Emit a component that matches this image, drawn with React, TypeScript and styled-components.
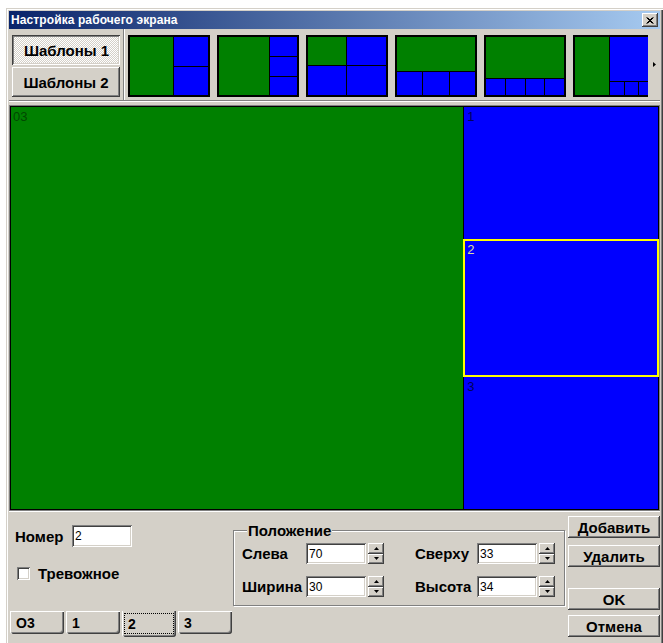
import React from 'react';
import styled, { createGlobalStyle, css } from 'styled-components';

const FACE = '#d4d0c8';
const LIGHT = '#ffffff';
const SHADOW = '#808080';
const DARK = '#404040';
const FONT = `"Liberation Sans", Arial, sans-serif`;

const Global = createGlobalStyle`
  html, body { margin: 0; padding: 0; background: #fff; overflow: hidden; }
  body { font-family: ${FONT}; color: #000; }
`;

const raised = css`
  box-shadow: inset -1px -1px ${DARK}, inset 1px 1px ${LIGHT}, inset -2px -2px ${SHADOW}, inset 2px 2px ${FACE};
`;

const sunken = css`
  box-shadow: inset 1px 1px ${SHADOW}, inset -1px -1px ${LIGHT}, inset 2px 2px ${DARK}, inset -2px -2px ${FACE};
`;

/* ---------- window frame ---------- */

const Desk = styled.div`
  padding: 8px 0 0 6px;
`;

const Window = styled.div`
  width: 657px;
  height: 642px;
  box-sizing: border-box;
  padding: 3px;
  background: ${FACE};
  box-shadow: inset 1px 1px ${FACE}, inset 2px 2px ${LIGHT}, inset -1px -1px ${DARK}, inset -2px -2px ${SHADOW};
  display: flex;
  flex-direction: column;
`;

const TitleBar = styled.div`
  height: 18px;
  flex: 0 0 18px;
  display: flex;
  align-items: center;
  padding: 0 2px 0 2px;
  background: linear-gradient(to right, #0a246a, #a6caf0);
`;

const Title = styled.span`
  flex: 1;
  color: #fff;
  font: bold 12px ${FONT};
  letter-spacing: 0.1px;
`;

const CloseButton = styled.button`
  width: 16px;
  height: 14px;
  padding: 0;
  border: 0;
  background: ${FACE};
  ${raised};
  display: flex;
  align-items: center;
  justify-content: center;
`;

/* ---------- template strip ---------- */

const TemplateRow = styled.div`
  flex: 0 0 72px;
  height: 72px;
  box-sizing: border-box;
  display: flex;
  border-bottom: 1px solid ${SHADOW};
  box-shadow: 0 1px ${LIGHT};
  margin-bottom: 4px;
`;

const TemplateTabs = styled.div`
  width: 114px;
  box-sizing: border-box;
  padding: 6px 3px 0 3px;
  display: flex;
  flex-direction: column;
  gap: 2px;
`;

const PanelButton = styled.button<{ $pressed?: boolean }>`
  height: 30px;
  border: 0;
  padding: 0;
  font: bold 15px ${FONT};
  color: #000;
  background: ${FACE};
  ${raised};
  ${(p) =>
    p.$pressed &&
    css`
      background: conic-gradient(#fff 25%, ${FACE} 0 50%, #fff 0 75%, ${FACE} 0);
      background-size: 2px 2px;
      box-shadow: inset 1px 1px ${DARK}, inset -1px -1px ${LIGHT}, inset 2px 2px ${SHADOW}, inset -2px -2px ${FACE};
      padding: 1px 0 0 1px;
    `}
`;

const Divider = styled.div`
  width: 1px;
  border-left: 1px solid ${SHADOW};
  background: ${LIGHT};
`;

const Thumbs = styled.div`
  flex: 1;
  display: flex;
  gap: 7px;
  padding: 6px 0 0 3px;
  overflow: hidden;
`;

const Thumb = styled.div<{ $cols: string; $rows: string }>`
  flex: 0 0 82px;
  height: 62px;
  box-sizing: border-box;
  display: grid;
  grid-template-columns: ${(p) => p.$cols};
  grid-template-rows: ${(p) => p.$rows};
  gap: 1px;
  padding: 1px;
  border: 1px solid #000;
  background: #000;
`;

const ThumbCell = styled.div<{ $area: string; $main?: boolean }>`
  grid-area: ${(p) => p.$area};
  background: ${(p) => (p.$main ? '#008000' : '#0000ff')};
`;

const ScrollArrow = styled.div`
  flex: 0 0 12px;
  display: flex;
  align-items: center;
  justify-content: center;
`;

/* ---------- zone canvas ---------- */

const Canvas = styled.div<{ $cols: string }>`
  flex: 0 0 406px;
  height: 406px;
  box-sizing: border-box;
  border: 1px solid ${SHADOW};
  padding: 1px;
  background: #000;
  display: grid;
  grid-template-columns: ${(p) => p.$cols};
  column-gap: 1px;
`;

const MainZone = styled.div`
  background: #008000;
  padding: 3px 2px;
`;

const SideColumn = styled.div`
  display: flex;
  flex-direction: column;
  gap: 1px;
`;

const SideZone = styled.div<{ $share: number; $selected?: boolean }>`
  flex: ${(p) => p.$share} 1 0;
  min-height: 0;
  background: #0000ff;
  padding: 3px 3px;
  ${(p) =>
    p.$selected &&
    css`
      outline: 2px solid #ffff00;
      outline-offset: -1px;
      position: relative;
    `}
`;

const ZoneLabel = styled.span<{ $color: string }>`
  display: block;
  font: 13px ${FONT};
  line-height: 13px;
  color: ${(p) => p.$color};
`;

/* ---------- bottom editor ---------- */

const Editor = styled.div`
  flex: 1;
  border-top: 1px solid ${LIGHT};
  padding-left: 1px;
  display: grid;
  grid-template-columns: 223px 332px 1fr;
  grid-template-rows: 99px 26px;
`;

const LeftColumn = styled.div`
  grid-column: 1;
  grid-row: 1;
  padding: 13px 0 0 5px;
`;

const Row = styled.div`
  display: flex;
  align-items: center;
`;

const Label = styled.span<{ $width?: number }>`
  font: bold 15px ${FONT};
  white-space: nowrap;
  ${(p) => p.$width !== undefined && `width: ${p.$width}px; flex: 0 0 ${p.$width}px;`}
`;

const TextBox = styled.div<{ $height: number }>`
  width: 60px;
  height: ${(p) => p.$height}px;
  box-sizing: border-box;
  background: #fff;
  ${sunken};
  padding: 0 3px;
  display: flex;
  align-items: center;
  font: 12px ${FONT};
`;

const CheckRow = styled(Row)`
  margin-top: 20px;
  height: 13px;
`;

const CheckBox = styled.span`
  width: 13px;
  height: 13px;
  margin-left: 2px;
  box-sizing: border-box;
  background: #fff;
  ${sunken};
`;

const CheckLabel = styled(Label)`
  margin-left: 8px;
`;

const GroupBox = styled.fieldset`
  grid-column: 2;
  grid-row: 1;
  align-self: start;
  margin: 11px 0 0 0;
  height: 83px;
  box-sizing: border-box;
  min-width: 0;
  padding: 5px 0 0 8px;
  border: 1px solid ${SHADOW};
  box-shadow: inset 1px 1px ${LIGHT}, 1px 1px ${LIGHT};
`;

const Legend = styled.legend`
  margin-left: 5px;
  padding: 0 1px;
  font: bold 15px ${FONT};
  line-height: 15px;
  background: ${FACE};
`;

const FieldGrid = styled.div`
  display: grid;
  grid-template-columns: 173px auto;
  row-gap: 12px;
`;

const Field = styled.div`
  display: flex;
  align-items: center;
`;

const Spin = styled.div`
  display: flex;
  flex-direction: column;
  margin-left: 2px;
  width: 16px;
  height: 21px;
`;

const SpinButton = styled.span`
  flex: 1;
  background: ${FACE};
  ${raised};
  display: flex;
  align-items: center;
  justify-content: center;
`;

const ButtonColumn = styled.div`
  grid-column: 3;
  grid-row: 1 / 3;
  padding: 4px 0 0 3px;
  display: flex;
  flex-direction: column;
`;

const ActionButton = styled.button<{ $gap?: number; $push?: boolean }>`
  height: 22px;
  flex: 0 0 22px;
  border: 0;
  padding: 0;
  font: bold 15px ${FONT};
  color: #000;
  background: ${FACE};
  ${raised};
  margin-top: ${(p) => (p.$push ? 'auto' : `${p.$gap ?? 0}px`)};
`;

const TabStrip = styled.div`
  grid-column: 1 / 3;
  grid-row: 2;
  display: flex;
  align-items: flex-start;
  gap: 2px;
  padding-left: 0;
`;

const Tab = styled.div<{ $active?: boolean }>`
  width: 54px;
  height: ${(p) => (p.$active ? 26 : 23)}px;
  box-sizing: border-box;
  padding: ${(p) => (p.$active ? '2px 2px 3px 1px' : '0 0 0 5px')};
  border-left: 1px solid ${LIGHT};
  border-top: ${(p) => (p.$active ? '0' : `1px solid ${LIGHT}`)};
  border-radius: 0 0 3px 3px;
  box-shadow: inset -1px -1px ${DARK}, inset -2px -2px ${SHADOW};
  display: flex;
  align-items: center;
  font: bold 14px ${FONT};
`;

const FocusRect = styled.span`
  flex: 1;
  align-self: stretch;
  display: flex;
  align-items: flex-end;
  padding: 0 0 1px 3px;
  border: 1px dotted #000;
`;

/* ---------- data ---------- */

type Template = { cols: string; rows: string; cells: string[] };

const templates: Template[] = [
  { cols: '44fr 34fr', rows: '1fr 1fr', cells: ['1 / 1 / 3 / 2', '1 / 2 / 2 / 3', '2 / 2 / 3 / 3'] },
  { cols: '51fr 27fr', rows: '20fr 21fr 19fr', cells: ['1 / 1 / 4 / 2', '1 / 2 / 2 / 3', '2 / 2 / 3 / 3', '3 / 2 / 4 / 3'] },
  { cols: '38fr 40fr', rows: '29fr 31fr', cells: ['1 / 1 / 2 / 2', '1 / 2 / 2 / 3', '2 / 1 / 3 / 2', '2 / 2 / 3 / 3'] },
  { cols: '1fr 1fr 1fr', rows: '36fr 24fr', cells: ['1 / 1 / 2 / 4', '2 / 1 / 3 / 2', '2 / 2 / 3 / 3', '2 / 3 / 3 / 4'] },
  { cols: '1fr 1fr 1fr 1fr', rows: '43fr 17fr', cells: ['1 / 1 / 2 / 5', '2 / 1 / 3 / 2', '2 / 2 / 3 / 3', '2 / 3 / 3 / 4', '2 / 4 / 3 / 5'] },
  { cols: '35fr 14fr 14fr 14fr', rows: '46fr 14fr', cells: ['1 / 1 / 3 / 2', '1 / 2 / 2 / 5', '2 / 2 / 3 / 3', '2 / 3 / 3 / 4', '2 / 4 / 3 / 5'] },
];

const sideZones = [
  { label: '1', share: 33 },
  { label: '2', share: 34, selected: true },
  { label: '3', share: 33 },
];

const tabs = ['O3', '1', '2', '3'];
const activeTab = '2';

const SpinArrow = ({ up }: { up?: boolean }) => (
  <svg width="5" height="3" viewBox="0 0 5 3">
    <polygon points={up ? '2.5,0 5,3 0,3' : '0,0 5,0 2.5,3'} fill="#000" />
  </svg>
);

const NumberField = ({ label, labelWidth, value }: { label: string; labelWidth: number; value: string }) => (
  <Field>
    <Label $width={labelWidth}>{label}</Label>
    <TextBox $height={21}>{value}</TextBox>
    <Spin>
      <SpinButton>
        <SpinArrow up />
      </SpinButton>
      <SpinButton>
        <SpinArrow />
      </SpinButton>
    </Spin>
  </Field>
);

export default function App() {
  return (
    <>
      <Global />
      <Desk>
        <Window>
          <TitleBar>
            <Title>Настройка рабочего экрана</Title>
            <CloseButton aria-label="Закрыть">
              <svg width="8" height="7" viewBox="0 0 8 7">
                <path d="M0.5 0.5L6.5 6.5M1.5 0.5L7.5 6.5M6.5 0.5L0.5 6.5M7.5 0.5L1.5 6.5" stroke="#000" strokeWidth="1" />
              </svg>
            </CloseButton>
          </TitleBar>

          <TemplateRow>
            <TemplateTabs>
              <PanelButton $pressed>Шаблоны 1</PanelButton>
              <PanelButton>Шаблоны 2</PanelButton>
            </TemplateTabs>
            <Divider />
            <Thumbs>
              {templates.map((t, i) => (
                <Thumb key={i} $cols={t.cols} $rows={t.rows}>
                  {t.cells.map((area, j) => (
                    <ThumbCell key={j} $area={area} $main={j === 0} />
                  ))}
                </Thumb>
              ))}
            </Thumbs>
            <ScrollArrow>
              <svg width="3" height="5" viewBox="0 0 3 5">
                <polygon points="0,0 3,2.5 0,5" fill="#000" />
              </svg>
            </ScrollArrow>
          </TemplateRow>

          <Canvas $cols="70fr 30fr">
            <MainZone>
              <ZoneLabel $color="#004800">03</ZoneLabel>
            </MainZone>
            <SideColumn>
              {sideZones.map((z) => (
                <SideZone key={z.label} $share={z.share} $selected={z.selected}>
                  <ZoneLabel $color={z.selected ? '#dcdc9c' : '#00005a'}>{z.label}</ZoneLabel>
                </SideZone>
              ))}
            </SideColumn>
          </Canvas>

          <Editor>
            <LeftColumn>
              <Row>
                <Label $width={57}>Номер</Label>
                <TextBox $height={22}>2</TextBox>
              </Row>
              <CheckRow>
                <CheckBox />
                <CheckLabel>Тревожное</CheckLabel>
              </CheckRow>
            </LeftColumn>

            <GroupBox>
              <Legend>Положение</Legend>
              <FieldGrid>
                <NumberField label="Слева" labelWidth={64} value="70" />
                <NumberField label="Сверху" labelWidth={62} value="33" />
                <NumberField label="Ширина" labelWidth={64} value="30" />
                <NumberField label="Высота" labelWidth={62} value="34" />
              </FieldGrid>
            </GroupBox>

            <ButtonColumn>
              <ActionButton>Добавить</ActionButton>
              <ActionButton $gap={7}>Удалить</ActionButton>
              <ActionButton $push>OK</ActionButton>
              <ActionButton $gap={5}>Отмена</ActionButton>
            </ButtonColumn>

            <TabStrip>
              {tabs.map((t) =>
                t === activeTab ? (
                  <Tab key={t} $active>
                    <FocusRect>{t}</FocusRect>
                  </Tab>
                ) : (
                  <Tab key={t}>{t}</Tab>
                )
              )}
            </TabStrip>
          </Editor>
        </Window>
      </Desk>
    </>
  );
}
